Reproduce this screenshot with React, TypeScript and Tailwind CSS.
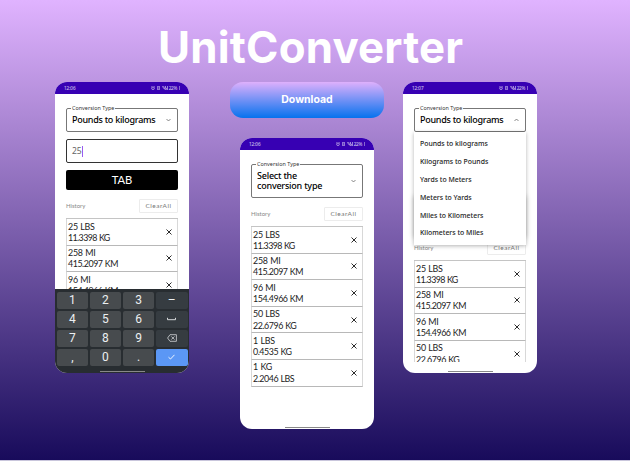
import React from "react";

type Entry = [string, string];

const entries: Entry[] = [
  ["25 LBS", "11.3398 KG"],
  ["258 MI", "415.2097 KM"],
  ["96 MI", "154.4966 KM"],
  ["50 LBS", "22.6796 KG"],
  ["1 LBS", "0.4535 KG"],
  ["1 KG", "2.2046 LBS"],
];

function Cross() {
  return (
    <svg className="h-[6px] w-[6px]" viewBox="0 0 6 6" stroke="#222" strokeWidth="0.95">
      <path d="M.5.5 5.5 5.5M5.5.5.5 5.5" />
    </svg>
  );
}

function Chevron({ up = false }: { up?: boolean }) {
  return (
    <svg className="h-[4px] w-[5px] shrink-0" viewBox="0 0 5 4" fill="none" stroke="#555" strokeWidth="0.7">
      <path d={up ? "M.5 3 2.5 1 4.5 3" : "M.5 1 2.5 3 4.5 1"} />
    </svg>
  );
}

function StatusBar({ time }: { time: string }) {
  return (
    <div className="flex h-[12px] shrink-0 items-center justify-between bg-[#3700b3] pl-[9px] pr-[9px] text-[4.6px] leading-none text-white/80">
      <span className="tracking-[-0.05px]">{time}</span>
      <span className="flex items-center gap-[2px]">
        <svg className="h-[4px] w-[4px]" viewBox="0 0 4 4" fill="none" stroke="currentColor" strokeWidth="0.6">
          <circle cx="2" cy="2.2" r="1.4" />
          <path d="M0 .6.8 0M4 .6 3.2 0M2 1.4V2.3" />
        </svg>
        <svg className="h-[4px] w-[3px]" viewBox="0 0 3 4" fill="none" stroke="currentColor" strokeWidth="0.6">
          <path d="M.4.4H2.6V3.6H.4ZM.8 2H2.2" />
        </svg>
        <span className="flex items-center tracking-[-0.25px]">
          <svg className="mr-[0.5px] h-[4px] w-[6px]" viewBox="0 0 6 4" fill="none" stroke="currentColor" strokeWidth="0.7">
            <path d="M0 .8H2.2M1 2H2.8V3.5M4 .4H3.3V2H4.3V3.6H3.2M5.6 0V4" />
          </svg>
          22%
        </span>
        <span className="h-[4px] w-[1px] bg-white/40" />
      </span>
    </div>
  );
}

function TypeSelect({ tall = false, up = false, children }: { tall?: boolean; up?: boolean; children: React.ReactNode }) {
  return (
    <div
      className={`relative mt-[14px] flex shrink-0 items-center justify-between rounded-[2px] border border-[#777] pl-[5px] pr-[6px] text-[9px] font-medium leading-[10px] text-black ${
        tall ? "h-[34px] tracking-[-0.22px]" : "h-[24px] tracking-[-0.27px]"
      }`}
    >
      <span className="absolute left-[4px] top-[-4px] whitespace-nowrap bg-white px-[1px] text-[5.4px] font-normal leading-[6px] tracking-[0.03px] text-[#333]">
        Conversion Type
      </span>
      <span className="whitespace-nowrap">{children}</span>
      <Chevron up={up} />
    </div>
  );
}

function HistoryHeader() {
  return (
    <div className="flex h-[14px] shrink-0 items-center justify-between font-['Lato',sans-serif]">
      <span className="pb-[1px] text-[6px] text-[#888]">History</span>
      <span className="flex h-[14px] w-[39px] items-center justify-center rounded-[1px] border border-[#ececec] text-[6.5px] tracking-[0.5px] text-[#777]">
        ClearAll
      </span>
    </div>
  );
}

function HistoryList({ count }: { count: number }) {
  return (
    <div className="shrink-0 border-t border-[#c4c4c4] font-['Lato',sans-serif]">
      {entries.slice(0, count).map(([from, to]) => (
        <div
          key={from}
          className="flex h-[26.6px] items-center justify-between border-x border-b border-x-[#d8d8d8] border-b-[#b8b8b8] pl-[1px] pr-[5px] text-[8.9px] leading-[11.3px] text-[#222]"
        >
          <span className="whitespace-nowrap [word-spacing:0.5px]">
            <span className="block tracking-[-0.25px]">{from}</span>
            <span className={`block ${to.startsWith("11") ? "tracking-[-0.6px]" : "tracking-[-0.45px]"}`}>{to}</span>
          </span>
          <Cross />
        </div>
      ))}
    </div>
  );
}

function Phone({ time, className = "", children }: { time: string; className?: string; children: React.ReactNode }) {
  return (
    <section
      className={`relative flex h-[291px] w-[134px] shrink-0 flex-col overflow-hidden rounded-[12px] bg-white font-['Noto_Sans',sans-serif] ${className}`}
    >
      <StatusBar time={time} />
      {children}
      <span className="absolute bottom-[1px] left-[45px] h-[1px] w-[45px] bg-[#888]" />
    </section>
  );
}

const keys = ["1", "2", "3", "–", "4", "5", "6", "space", "7", "8", "9", "back", ",", "0", ".", "ok"];

function KeyFace({ name }: { name: string }) {
  if (name === "space")
    return (
      <svg className="h-[4px] w-[9px]" viewBox="0 0 9 4" fill="none" stroke="#d5d8da">
        <path d="M.5.8V2.7H8.5V.8" />
      </svg>
    );
  if (name === "back")
    return (
      <svg className="h-[8px] w-[10px]" viewBox="0 0 10 8" fill="none" stroke="#d5d8da" strokeWidth="0.8">
        <path d="M3 .7H9.4V7.3H3L.6 4ZM4.3 2.4 7.5 5.6M7.5 2.4 4.3 5.6" />
      </svg>
    );
  if (name === "ok")
    return (
      <svg className="h-[6px] w-[7px]" viewBox="0 0 7 6" fill="none" stroke="#fff" strokeWidth="0.9">
        <path d="M.5 3.2 2.5 5 6.5.8" />
      </svg>
    );
  return <>{name}</>;
}

function Keyboard() {
  return (
    <div className="grid h-[84px] shrink-0 grid-cols-4 content-start gap-x-[1.4px] gap-y-[2px] bg-[#282d31] px-[1.5px] pt-[3px] font-['Roboto',sans-serif] text-[12px] leading-none text-[#eceff1]">
      {keys.map((k, i) => (
        <span
          key={k}
          className={`flex h-[16.9px] items-center justify-center rounded-[2px] ${
            k === "ok" ? "bg-[#5b97f5]" : i % 4 === 3 ? "bg-[#363c41]" : "bg-[#474b4e]"
          }`}
        >
          <KeyFace name={k} />
        </span>
      ))}
    </div>
  );
}

const options = [
  "Pounds to kilograms",
  "Kilograms to Pounds",
  "Yards to Meters",
  "Meters to Yards",
  "Miles to Kilometers",
  "Kilometers to Miles",
];

export default function App() {
  return (
    <div className="h-[461px] w-[630px] overflow-hidden bg-[#c9c6dc]">
      <main className="flex h-[460px] flex-col bg-linear-to-b/srgb from-[#e0b3ff] to-[#180b5b]">
        <h1 className="mt-[21px] h-[61px] shrink-0 pl-[158px] font-['Inter',sans-serif] text-[43.8px] font-bold leading-[53px] tracking-[0.2px] text-white">
          UnitConverter
        </h1>
        <div className="flex items-start pl-[55px]">
          <Phone time="12:06">
            <div className="flex h-[195px] shrink-0 flex-col overflow-hidden px-[11px]">
              <TypeSelect>Pounds to kilograms</TypeSelect>
              <div className="mt-[7px] flex h-[24px] shrink-0 items-center rounded-[2px] border border-[#333] pl-[5px] text-[8.5px] text-[#666]">
                25
                <span className="h-[11px] w-[1px] bg-[#9a5cf0]" />
              </div>
              <div className="mb-[9px] mt-[7px] flex h-[20px] shrink-0 items-center justify-center rounded-[2px] bg-black font-['Lato',sans-serif] text-[11.2px] text-white">
                TAB
              </div>
              <HistoryHeader />
              <div className="h-[5px] shrink-0" />
              <HistoryList count={3} />
            </div>
            <Keyboard />
          </Phone>
          <div className="ml-[41px] flex w-[154px] flex-col items-center">
            <button className="h-[36px] w-[154px] rounded-[13px] bg-linear-to-b/srgb from-[#deb0fc] to-[#0672ee] font-['Inter',sans-serif] text-[10.5px] font-bold text-white">
              Download
            </button>
            <Phone time="12:06" className="mt-[20px]">
              <div className="flex flex-col px-[11px]">
                <TypeSelect tall>
                  Select the
                  <br />
                  conversion type
                </TypeSelect>
                <div className="h-[9px]" />
                <HistoryHeader />
                <div className="h-[5px]" />
                <HistoryList count={6} />
              </div>
            </Phone>
          </div>
          <Phone time="12:07" className="ml-[19px]">
            <div className="relative flex h-[268px] flex-col overflow-hidden px-[11px]">
              <TypeSelect up>Pounds to kilograms</TypeSelect>
              <div className="mt-[64px] h-[42px] shrink-0 shadow-[0_0_5px_rgba(0,0,0,0.28)]" />
              <div className="mt-[3px] shrink-0">
                <HistoryHeader />
              </div>
              <div className="h-[5px] shrink-0" />
              <HistoryList count={4} />
              <ul className="absolute left-[11px] top-[38px] flex h-[113px] w-[112px] flex-col bg-white pl-[6px] pt-[3px] text-[6.9px] font-medium text-[#222] shadow-[0_1px_4px_rgba(0,0,0,0.3)]">
                {options.map((o) => (
                  <li key={o} className="h-[17.9px] shrink-0 leading-[17.9px]">
                    {o}
                  </li>
                ))}
              </ul>
            </div>
          </Phone>
        </div>
      </main>
    </div>
  );
}
